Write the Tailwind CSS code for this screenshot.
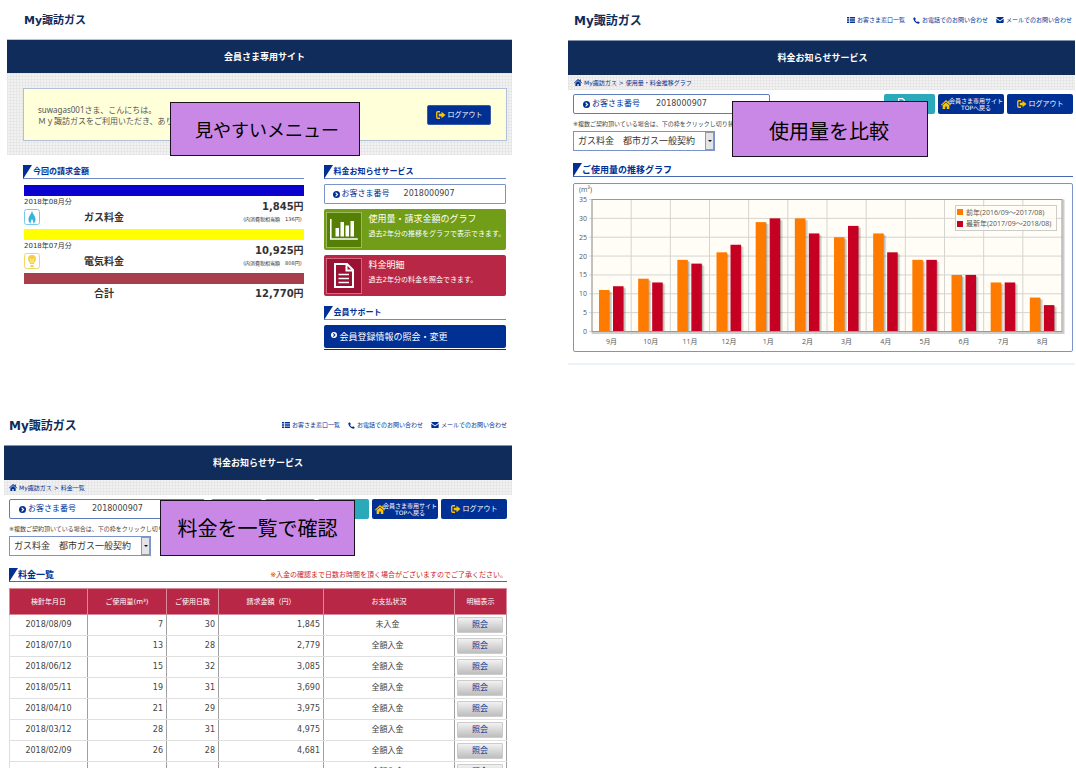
<!DOCTYPE html>
<html lang="ja">
<head>
<meta charset="utf-8">
<title>My諏訪ガス</title>
<script src="https://cdn.jsdelivr.net/npm/@tailwindcss/browser@4"></script>
</head>
<body class="h-screen overflow-hidden bg-white font-['DejaVu_Sans','Noto_Sans_CJK_JP',sans-serif] text-[8px] leading-[12px] text-[#444]">

<svg class="hidden" aria-hidden="true">
  <symbol id="i-exit" viewBox="0 0 20 16"><path d="M8 1.500H3.500a2 2 0 0 0-2 2v9a2 2 0 0 0 2 2H8" fill="none" stroke="currentColor" stroke-width="2.600"/><path d="M5.500 5.500H11V1.500l8 6.500-8 6.500v-4H5.500z" fill="currentColor"/></symbol>
  <symbol id="i-home" viewBox="0 0 18 16"><path d="M9 0 0 8.300l1.200 1.400L9 3l7.800 6.700L18 8.300l-2.700-2.500V1.200H13v2.500z" fill="currentColor"/><path d="M9 4.300 3 9.500V16h4.500v-4.500h3V16H15V9.500z" fill="currentColor"/></symbol>
  <symbol id="i-go" viewBox="0 0 16 16"><circle cx="8" cy="8" r="8" fill="currentColor"/><path d="m6 3.500 4.500 4.500L6 12.500" fill="none" stroke="#fff" stroke-width="2.600"/></symbol>
  <symbol id="i-list" viewBox="0 0 16 12"><path d="M0 0h4.500v3H0zM6 0h10v3H6zM0 4.500h4.500v3H0zM6 4.500h10v3H6zM0 9h4.500v3H0zM6 9h10v3H6z" fill="currentColor"/></symbol>
  <symbol id="i-tel" viewBox="0 0 16 16"><path d="M4 .5 1 2C-.5 8 7.500 16 13.500 15.500l2-3-4-2.800-2 1.800C7.500 10.500 5.500 8.500 4.700 6.700l1.800-2z" fill="currentColor"/></symbol>
  <symbol id="i-mail" viewBox="0 0 16 13"><path d="M1.500 0h13A1.500 1.500 0 0 1 16 1.500L8 7.500 0 1.500A1.500 1.500 0 0 1 1.500 0z" fill="currentColor"/><path d="M0 4l8 5.500L16 4v7.500a1.500 1.500 0 0 1-1.500 1.500h-13A1.500 1.500 0 0 1 0 11.500z" fill="currentColor"/></symbol>
  <symbol id="i-wedge" viewBox="0 0 9 14"><path d="M0 0h9L0 14z" fill="#003094"/></symbol>
</svg>

<main class="grid grid-cols-[128fr_141fr] grid-rows-[405px_auto]">

  <!-- Member top page -->
  <section class="relative pl-[7px]">
    <header class="flex h-10 items-center pt-0.5 pl-[17px]"><h1 class="text-[11px] font-bold text-[#102c5a]">My諏訪ガス</h1></header>
    <h2 class="-mt-px flex h-[34px] items-center justify-center border-t border-[#b9c3d6] bg-[#102c5a] pl-[10px] text-[9px] font-bold text-white">会員さま専用サイト</h2>
    <div class="bg-[#f1f1f1] bg-[repeating-linear-gradient(90deg,#dddddd70_0_1px,transparent_1px_3px),repeating-linear-gradient(0deg,#dddddd70_0_1px,transparent_1px_3px)] pt-[15px] pr-[5px] pb-3.5 pl-4">
      <div class="flex h-[53px] items-center justify-between border border-[#b0c0d8] bg-[#ffffda] pr-[15px] pl-3.5">
        <p class="font-['Noto_Sans','Noto_Sans_CJK_JP',sans-serif] leading-[11px] whitespace-nowrap text-[#555]">suwagas001さま、こんにちは。<br>Ｍｙ諏訪ガスをご利用いただき、ありが</p>
        <button class="flex h-5 w-16 shrink-0 items-center justify-center gap-0.5 rounded-[2px] border border-[#3b5aa5] bg-[#003094] text-[7px] text-white"><svg class="h-2 w-[10px] text-[#ffc400]"><use href="#i-exit"/></svg>ログアウト</button>
      </div>
    </div>
    <div class="grid grid-cols-[280fr_182fr] gap-5 pt-[10px] pr-[6px] pl-4">
      <div>
        <h3 class="flex h-3.5 items-center gap-px border-b border-[#7088c4] font-bold text-[#003094]"><svg class="h-3.5 w-[9px]"><use href="#i-wedge"/></svg>今回の請求金額</h3>
        <div class="mt-1.5 ml-px">
          <div class="h-[11px] bg-[#0b00ce]"></div>
          <div class="grid h-[33px] grid-cols-[60px_1fr_auto] text-[#333]">
            <div><p class="text-[7px] leading-[13px] whitespace-nowrap">2018年08月分</p>
              <svg class="size-4" viewBox="0 0 16 16"><rect x=".5" y=".5" width="15" height="15" rx="2" fill="#fff" stroke="#7cc8ea"/><path d="M8 1.500C8.500 5 11.500 7 11.500 10.500c0 2-1 3.500-2.500 4 .8-2-.2-3-1-4.500-.8 1.500-1.800 2.500-1 4.500-1.500-.5-2.500-2-2.500-4C4.500 7 7.500 5 8 1.500z" fill="#35b2dd"/></svg></div>
            <p class="pt-4 text-[10px] font-bold">ガス料金</p>
            <div class="pt-[5px] text-right"><p class="text-[10px] font-bold">1,845円</p><p class="pr-0.5 text-[5px] leading-[13px]">(内消費税相当額　136円)</p></div>
          </div>
          <div class="h-[11px] bg-[#ffff00]"></div>
          <div class="grid h-[33px] grid-cols-[60px_1fr_auto] text-[#333]">
            <div><p class="text-[7px] leading-[13px] whitespace-nowrap">2018年07月分</p>
              <svg class="size-4" viewBox="0 0 16 16"><rect x=".5" y=".5" width="15" height="15" rx="2" fill="#fff" stroke="#f3d66b"/><path d="M8 2a4 4 0 0 0-4 4c0 2 1.800 3 2 5h4c.2-2 2-3 2-5a4 4 0 0 0-4-4z" fill="#f4d03c"/><path d="M6.500 12h3v2h-3z" fill="#f4d03c"/><path d="M7 10V7L6 5.500M9 10V7l1-1.500" stroke="#fff" stroke-width=".7" fill="none"/></svg></div>
            <p class="pt-4 text-[10px] font-bold">電気料金</p>
            <div class="pt-[5px] text-right"><p class="text-[10px] font-bold">10,925円</p><p class="pr-0.5 text-[5px] leading-[13px]">(内消費税相当額　808円)</p></div>
          </div>
          <div class="h-[11px] bg-[#a83e4c]"></div>
          <div class="flex justify-between pt-1 pl-[70px] text-[10px] font-bold text-[#333]"><p>合計</p><p>12,770円</p></div>
        </div>
      </div>
      <div>
        <h3 class="flex h-3.5 items-center gap-px border-b border-[#7088c4] font-bold text-[#003094]"><svg class="h-3.5 w-[9px]"><use href="#i-wedge"/></svg>料金お知らせサービス</h3>
        <p class="mt-[5px] flex h-5 items-center rounded-[1px] border border-[#7b93c9] pl-2"><svg class="mr-0.5 size-[7px] text-[#003094]"><use href="#i-go"/></svg><span class="text-[#003094]">お客さま番号</span><span class="ml-3.5">2018000907</span></p>
        <a href="#graph" class="mt-[5px] flex h-[41px] items-center rounded-[2px] bg-[#719d18] pl-0.5 text-white">
          <svg class="mr-[7px] size-9 shrink-0" viewBox="0 0 36 36"><rect x=".5" y=".5" width="35" height="35" fill="#567f05" stroke="#9dba62"/><path d="M4.800 7v20h27" fill="none" stroke="#fff" stroke-width="1.600"/><path d="M9.500 16H13v8.500H9.500zM14.500 10H18v14.500h-3.500zM19.500 13.500H23v11h-3.500zM24.500 9H28v15.500h-3.500z" fill="#fff"/></svg>
          <span class="-mt-1.5 whitespace-nowrap"><span class="block text-[9px] leading-[15px]">使用量・請求金額のグラフ</span><span class="block text-[7px] leading-[14px]">過去2年分の推移をグラフで表示できます。</span></span></a>
        <a href="#list" class="mt-[5px] flex h-[41px] items-center rounded-[2px] bg-[#b82846] pl-0.5 text-white">
          <svg class="mr-[7px] size-9 shrink-0" viewBox="0 0 36 36"><rect x=".5" y=".5" width="35" height="35" fill="#9b1133" stroke="#cd6a80"/><path d="M9 6h12l6 6v17H9zM20.500 6v6.500H27" fill="none" stroke="#fff" stroke-width="2"/><path d="M12.500 16.500h10.500M12.500 20.500h10.500M12.500 24.500h10.500" stroke="#fff" stroke-width="1.600"/></svg>
          <span class="-mt-1.5 whitespace-nowrap"><span class="block text-[9px] leading-[15px]">料金明細</span><span class="block text-[7px] leading-[14px]">過去2年分の料金を照会できます。</span></span></a>
        <h3 class="mt-[10px] flex h-3.5 items-center gap-px border-b border-[#7088c4] font-bold text-[#003094]"><svg class="h-3.5 w-[9px]"><use href="#i-wedge"/></svg>会員サポート</h3>
        <a href="#support" class="mt-[5px] flex h-[23px] items-center rounded-[2px] bg-[#003094] pl-[7px] text-[9px] text-white"><svg class="mr-[3px] mb-1 size-1.5" viewBox="0 0 16 16"><circle cx="8" cy="8" r="8" fill="#fff"/><path d="m6 3.500 4.500 4.500L6 12.500" fill="none" stroke="#003094" stroke-width="3"/></svg>会員登録情報の照会・変更</a>
        <div class="mt-px h-px bg-[#003094]"></div>
      </div>
    </div>
    <p class="absolute top-[102px] left-[170px] flex h-[54px] w-[190px] items-center justify-center border border-[#1a121e] bg-[#c987e6] pl-1 font-['Noto_Sans_CJK_JP',sans-serif] text-[18px] text-black">見やすいメニュー</p>
  </section>

  <!-- Usage graph page -->
  <section id="graph" class="relative pr-px pl-14">
    <header class="flex h-10 items-center justify-between pr-[3px] pl-1.5"><h1 class="pt-0.5 text-[12px] font-bold text-[#102c5a]">My諏訪ガス</h1>
      <nav class="flex items-center gap-2 text-[6px] text-[#003094]">
        <a href="#office" class="flex items-center gap-0.5"><svg class="h-1.5 w-2"><use href="#i-list"/></svg>お客さま窓口一覧</a>
        <a href="#tel" class="flex items-center gap-0.5"><svg class="size-[7px]"><use href="#i-tel"/></svg>お電話でのお問い合わせ</a>
        <a href="#mail" class="flex items-center gap-0.5"><svg class="h-1.5 w-2"><use href="#i-mail"/></svg>メールでのお問い合わせ</a>
      </nav></header>
    <h2 class="flex h-[35px] items-center justify-center border-t border-[#8492ae] bg-[#102c5a] pl-0.5 text-[9px] font-bold text-white">料金お知らせサービス</h2>
    <nav class="flex h-[15px] items-center gap-0.5 bg-[#f1f1f1] bg-[repeating-linear-gradient(90deg,#dddddd70_0_1px,transparent_1px_3px),repeating-linear-gradient(0deg,#dddddd70_0_1px,transparent_1px_3px)] pl-1.5 text-[6px] text-[#003094]"><svg class="h-[7px] w-2"><use href="#i-home"/></svg><a href="#top">My諏訪ガス</a><span>&gt;</span><a href="#graph">使用量・料金推移グラフ</a></nav>
    <div class="pt-1 pr-0.5 pl-[5px]">
      <div class="flex h-5 items-stretch gap-[3px]">
        <p class="mr-auto flex w-[197px] items-center rounded-[2px] border border-[#5d7bbd] pl-[9px]"><svg class="mr-0.5 size-[7px] text-[#003094]"><use href="#i-go"/></svg><span class="text-[#003094]">お客さま番号</span><span class="ml-4">2018000907</span></p>
        <a href="#list" aria-label="料金一覧" class="flex w-[51px] justify-center rounded-[2px] bg-[#2aa9ba] pt-1"><svg class="mr-4 h-2 w-[7px]" viewBox="0 0 12 14"><path d="M1 1h7l3 3v9H1z" fill="none" stroke="#fff" stroke-width="2"/></svg></a>
        <a href="#top" class="flex w-[66px] items-center rounded-[2px] bg-[#003094] pl-[3px] text-center text-[6px] leading-[7px] whitespace-nowrap text-white"><svg class="h-[9px] w-[10px] shrink-0 text-[#ffc400]"><use href="#i-home"/></svg><span class="-ml-0.5">会員さま専用サイト<br>TOPへ戻る</span></a>
        <button class="flex w-[66px] items-center justify-center gap-0.5 rounded-[2px] bg-[#003094] text-[7px] text-white"><svg class="h-2 w-[10px] text-[#ffc400]"><use href="#i-exit"/></svg>ログアウト</button>
      </div>
      <label for="c1" class="mt-1 block text-[6px] whitespace-nowrap">※複数ご契約頂いている場合は、下の枠をクリックし切り替</label>
      <div class="relative mt-px w-[142px]"><select id="c1" class="block h-5 w-full appearance-none border border-[#7b93c9] bg-white pl-1 text-[9px] text-[#333]"><option>ガス料金　都市ガス一般契約</option></select><span class="pointer-events-none absolute inset-y-px right-px flex w-[9px] items-center justify-center border border-[#999] bg-[#e4e4e8]"><svg class="h-0.5 w-1" viewBox="0 0 4 2"><path d="M0 0h4L2 2z" fill="#111"/></svg></span></div>
      <h3 class="mt-3 flex h-3.5 items-center border-b border-[#4767b3] text-[9px] font-bold text-[#003094]"><svg class="h-3.5 w-[9px]"><use href="#i-wedge"/></svg>ご使用量の推移グラフ</h3>
      <div class="mt-1.5 rounded-[2px] border border-[#7b93c9]">
        <svg id="chart" class="block h-auto w-full font-['Open_Sans','Noto_Sans_CJK_JP',sans-serif] text-[7px]" viewBox="0 0 498 167" fill="#555" role="img" aria-label="ご使用量の推移グラフ">
          <text x="5" y="8">(m³)</text>
        </svg>
      </div>
    </div>
    <div class="mt-[11px] h-0.5 bg-[#edf2fa]"></div>
    <p class="absolute top-[101px] left-[220px] flex h-14 w-[196px] items-center justify-center border border-[#1a121e] bg-[#c987e6] pt-1 pr-0.5 font-['Noto_Sans_CJK_JP',sans-serif] text-[20px] text-black">使用量を比較</p>
  </section>

  <!-- Billing list page -->
  <section id="list" class="relative pl-1">
    <header class="flex h-10 items-center justify-between pr-[5px] pl-[5px]"><h1 class="pt-0.5 text-[12px] font-bold text-[#102c5a]">My諏訪ガス</h1>
      <nav class="flex items-center gap-2 text-[6px] text-[#003094]">
        <a href="#office" class="flex items-center gap-0.5"><svg class="h-1.5 w-2"><use href="#i-list"/></svg>お客さま窓口一覧</a>
        <a href="#tel" class="flex items-center gap-0.5"><svg class="size-[7px]"><use href="#i-tel"/></svg>お電話でのお問い合わせ</a>
        <a href="#mail" class="flex items-center gap-0.5"><svg class="h-1.5 w-2"><use href="#i-mail"/></svg>メールでのお問い合わせ</a>
      </nav></header>
    <h2 class="flex h-[35px] items-center justify-center border-t border-[#8492ae] bg-[#102c5a] text-[9px] font-bold text-white">料金お知らせサービス</h2>
    <nav class="flex h-[15px] items-center gap-0.5 bg-[#f1f1f1] bg-[repeating-linear-gradient(90deg,#dddddd70_0_1px,transparent_1px_3px),repeating-linear-gradient(0deg,#dddddd70_0_1px,transparent_1px_3px)] pl-[5px] text-[6px] text-[#003094]"><svg class="h-[7px] w-2"><use href="#i-home"/></svg><a href="#top">My諏訪ガス</a><span>&gt;</span><a href="#list">料金一覧</a></nav>
    <div class="pt-1 pr-[5px] pl-[5px]">
      <div class="flex h-5 items-stretch gap-[3px]">
        <p class="mr-auto flex w-[196px] items-center rounded-[2px] border border-[#5d7bbd] pl-[9px]"><svg class="mr-0.5 size-[7px] text-[#003094]"><use href="#i-go"/></svg><span class="text-[#003094]">お客さま番号</span><span class="ml-4">2018000907</span></p>
        <a href="#a" aria-label="使用量グラフ" class="w-[51px] rounded-[2px] bg-[#2aa9ba]"></a>
        <a href="#b" aria-label="金額グラフ" class="w-[50px] rounded-[2px] bg-[#2aa9ba]"></a>
        <a href="#c" aria-label="料金明細" class="w-[51px] rounded-[2px] bg-[#2aa9ba]"></a>
        <a href="#top" class="flex w-[66px] items-center rounded-[2px] bg-[#003094] pl-[3px] text-center text-[6px] leading-[7px] whitespace-nowrap text-white"><svg class="h-[9px] w-[10px] shrink-0 text-[#ffc400]"><use href="#i-home"/></svg><span class="-ml-0.5">会員さま専用サイト<br>TOPへ戻る</span></a>
        <button class="flex w-[66px] items-center justify-center gap-0.5 rounded-[2px] bg-[#003094] text-[7px] text-white"><svg class="h-2 w-[10px] text-[#ffc400]"><use href="#i-exit"/></svg>ログアウト</button>
      </div>
      <label for="c2" class="mt-1 block text-[6px] whitespace-nowrap">※複数ご契約頂いている場合は、下の枠をクリックし切り</label>
      <div class="relative mt-px w-[142px]"><select id="c2" class="block h-5 w-full appearance-none border border-[#7b93c9] bg-white pl-1 text-[9px] text-[#333]"><option>ガス料金　都市ガス一般契約</option></select><span class="pointer-events-none absolute inset-y-px right-px flex w-[9px] items-center justify-center border border-[#999] bg-[#e4e4e8]"><svg class="h-0.5 w-1" viewBox="0 0 4 2"><path d="M0 0h4L2 2z" fill="#111"/></svg></span></div>
      <div class="mt-3 flex h-3.5 items-center border-b border-[#4767b3]"><h3 class="flex items-center text-[9px] font-bold text-[#003094]"><svg class="h-3.5 w-[9px]"><use href="#i-wedge"/></svg>料金一覧</h3><p class="ml-auto text-[7px] whitespace-nowrap text-[#d01818]">※入金の確認まで日数お時間を頂く場合がございますのでご了承ください。</p></div>
      <table class="mt-1.5 w-full table-fixed border-collapse [&_td]:h-[21px] [&_td]:border-x [&_td]:border-b [&_td]:border-x-[#a0a0a0] [&_td]:border-b-[#e0e0e0] [&_td]:py-0 [&_td:first-child]:border-l-[#ddd] [&_td:first-child]:text-center [&_td:nth-child(5)]:text-center [&_td:nth-child(n+2)]:pr-[3px] [&_td:last-child]:pr-0.5 [&_th]:border [&_th]:border-[#d98a9a]">
        <colgroup><col class="w-[78px]"><col class="w-[79px]"><col class="w-[52px]"><col class="w-[105px]"><col><col class="w-[52px]"></colgroup>
        <thead><tr class="h-[26px] bg-[#b82846] text-[7px] text-white"><th class="font-normal">検針年月日</th><th class="font-normal">ご使用量(m³)</th><th class="font-normal">ご使用日数</th><th class="font-normal">請求金額（円）</th><th class="font-normal">お支払状況</th><th class="font-normal">明細表示</th></tr></thead>
        <tbody id="rows" class="text-right"></tbody>
      </table>
    </div>
    <p class="absolute top-[95px] left-40 flex h-14 w-[195px] items-center justify-center border border-[#1a121e] bg-[#c987e6] font-['Noto_Sans_CJK_JP',sans-serif] text-[20px] text-black">料金を一覧で確認</p>
  </section>
</main>

<script>
  const bills = [
    ['2018/08/09', 7, 30, '1,845', '未入金'], ['2018/07/10', 13, 28, '2,779', '全額入金'],
    ['2018/06/12', 15, 32, '3,085', '全額入金'], ['2018/05/11', 19, 31, '3,690', '全額入金'],
    ['2018/04/10', 21, 29, '3,975', '全額入金'], ['2018/03/12', 28, 31, '4,975', '全額入金'],
    ['2018/02/09', 26, 28, '4,681', '全額入金'], ['', '', '', '', '全額入金']
  ];
  document.getElementById('rows').innerHTML = bills.map(r =>
    '<tr>' + r.map(c => `<td>${c}</td>`).join('') +
    '<td class="pl-0.5"><button class="block h-4 w-full rounded-[1px] border border-[#ccc] bg-linear-to-b from-[#f2f2f2] to-[#bdbdbd] leading-[14px] text-[#003094]">照会</button></td></tr>').join('');

  // Bar chart: previous year against latest year, by month
  const previous = [11, 14, 19, 21, 29, 30, 25, 26, 19, 15, 13, 9];
  const latest = [12, 13, 18, 23, 30, 26, 28, 21, 19, 15, 13, 7];
  const left = 18, right = 488, top0 = 15.5, base = 147.5;
  const step = (right - left) / 12, unit = (base - top0) / 35;
  let s = `<rect x="${left}" y="${top0}" width="${right - left}" height="${base - top0}" fill="#fffdf6"/>`;
  for (let v = 0; v <= 35; v += 5) {
    const y = base - v * unit;
    s += `<path d="M${left - 3} ${y}H${right}" stroke="#d4d4d0"/><text x="${left - 5}" y="${y + 2.5}" text-anchor="end">${v}</text>`;
  }
  for (let i = 0; i < 12; i++) {
    const x = left + i * step;
    s += `<path d="M${x} ${top0}V${base + 3}" stroke="#d4d4d0"/><text x="${x + step / 2}" y="160" text-anchor="middle">${(i + 8) % 12 + 1}月</text>`;
  }
  s += `<path d="M${left} ${base + 1.5}H${right + 1.5}V${top0}" fill="none" stroke="#ccc" stroke-width="2"/>`;
  const bar = (x, v, c) => {
    const h = v * unit;
    s += `<rect x="${x + 2.5}" y="${base - h + 2}" width="10.5" height="${h - 2}" fill="#000" opacity=".14"/><rect x="${x + 1}" y="${base - h + 1}" width="10.5" height="${h - 1}" fill="#000" opacity=".18"/><rect x="${x}" y="${base - h}" width="10.5" height="${h}" fill="${c}"/>`;
  };
  for (let i = 0; i < 12; i++) {
    bar(left + i * step + 7, previous[i], '#ff7b00');
    bar(left + i * step + 21, latest[i], '#c50022');
  }
  s += `<rect x="${left}" y="${top0}" width="${right - left}" height="${base - top0}" fill="none" stroke="#999"/>
    <rect x="381.500" y="21.500" width="101" height="25" fill="#fffdf6" fill-opacity=".8" stroke="#ccc"/>
    <rect x="383" y="25" width="6" height="6" fill="#ff7b00"/><rect x="383" y="37" width="6" height="6" fill="#c50022"/>
    <text x="392" y="31">前年(2016/09～2017/08)</text><text x="392" y="42">最新年(2017/09～2018/08)</text>`;
  document.getElementById('chart').insertAdjacentHTML('beforeend', s);
</script>
</body>
</html>
